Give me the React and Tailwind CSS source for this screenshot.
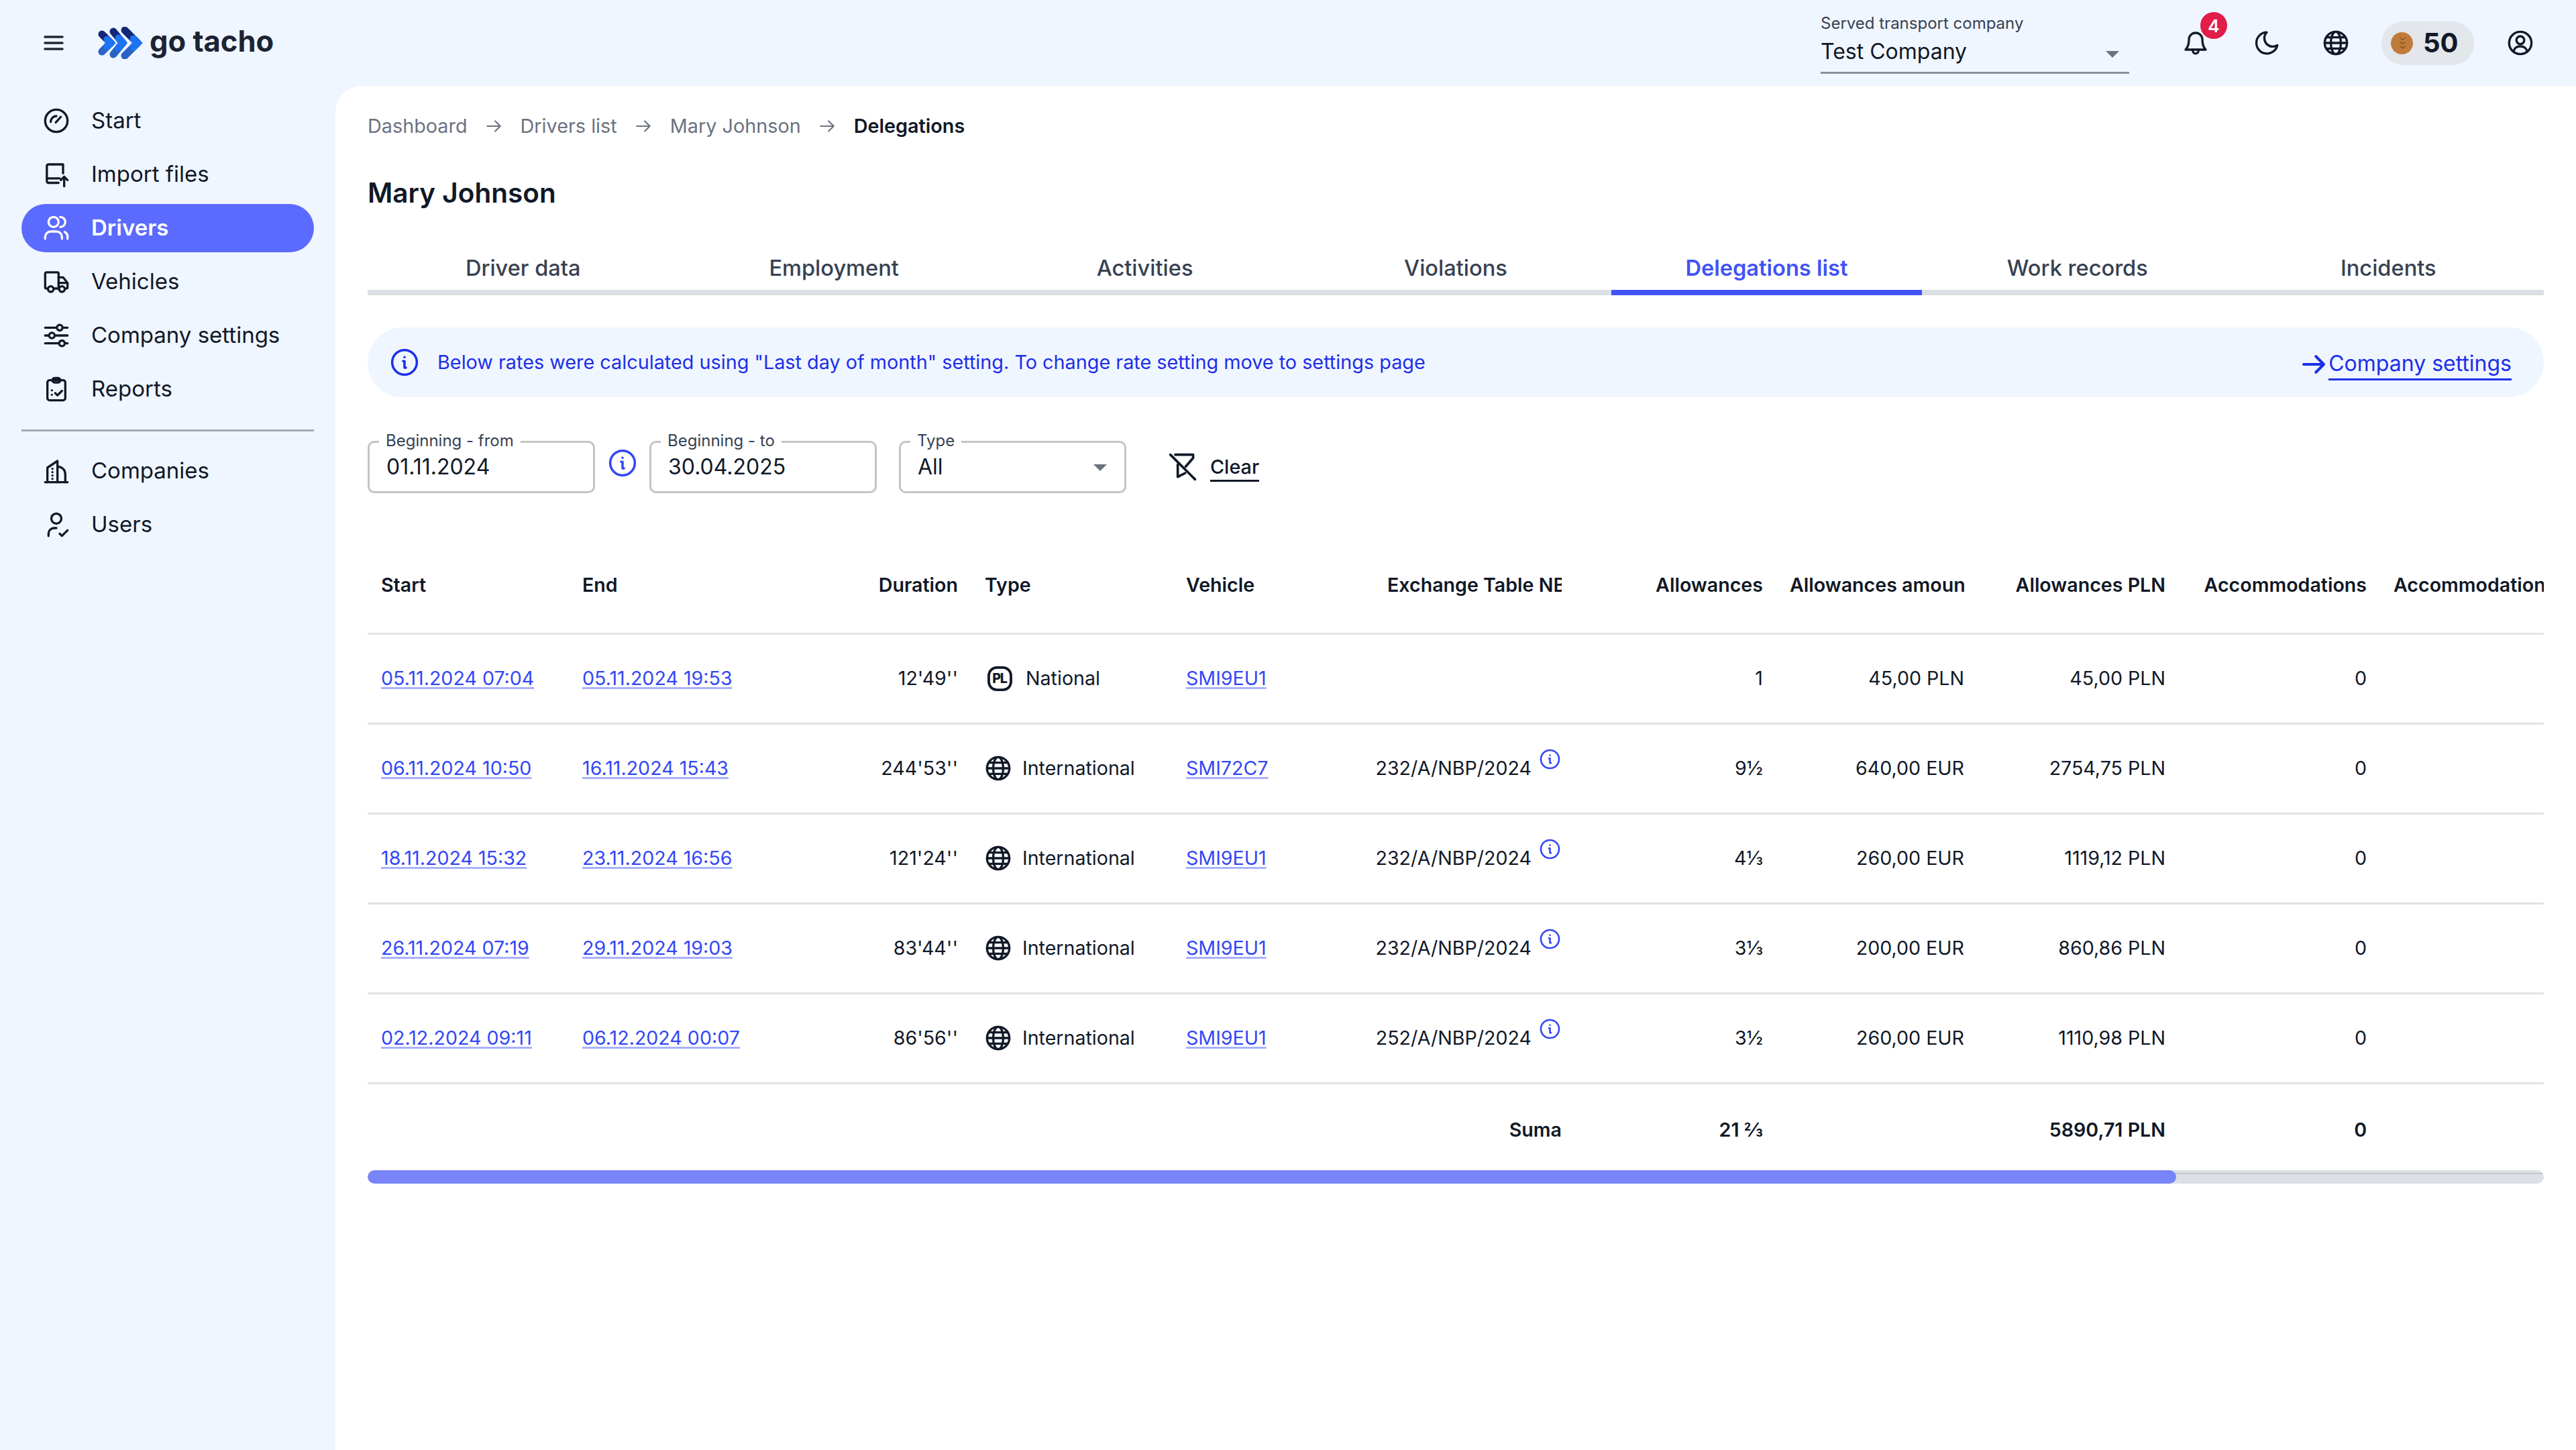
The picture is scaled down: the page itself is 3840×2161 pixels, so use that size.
import React from "react";

const Svg = ({ className = "", children, sw = 2 }) => (
  <svg viewBox="0 0 24 24" fill="none" stroke="currentColor" strokeWidth={sw} strokeLinecap="round" strokeLinejoin="round" className={className}>
    {children}
  </svg>
);

const GaugeIcon = (p) => (
  <Svg {...p}>
    <circle cx="12" cy="12" r="10" />
    <path d="M7 13a5 5 0 0 1 5-5.200" />
    <path d="M11.500 13.500 16 8.500" />
  </Svg>
);
const ImportIcon = (p) => (
  <Svg {...p}>
    <path d="M18 11V3H5a1.500 1.500 0 0 0-1.500 1.500V18A1.500 1.500 0 0 0 5 19.500h9" />
    <path d="M3.500 15.500H15" />
    <path d="M19 22.500V14m-3 3 3-3 3 3" />
  </Svg>
);
const UsersIcon = (p) => (
  <Svg {...p}>
    <circle cx="9.500" cy="6.500" r="4.500" />
    <path d="M2 21.500V20a5 5 0 0 1 5-5h5a5 5 0 0 1 5 5v1.500" />
    <path d="M15.500 2a4.500 4.500 0 0 1 0 9" />
    <path d="M19.500 15.500a4.500 4.500 0 0 1 2.500 4v2" />
  </Svg>
);
const TruckIcon = (p) => (
  <Svg {...p}>
    <path d="M4 18H3a1 1 0 0 1-1-1V4.500a1 1 0 0 1 1-1h10a1 1 0 0 1 1 1V18h-4" />
    <path d="M14 8h4l4 5v4a1 1 0 0 1-1 1h-1" />
    <path d="M14 13h8" />
    <circle cx="7" cy="18.500" r="2.500" />
    <circle cx="17" cy="18.500" r="2.500" />
  </Svg>
);
const SlidersIcon = (p) => (
  <Svg {...p}>
    <path d="M2 5h10m6 0h4" />
    <circle cx="15" cy="5" r="2.500" />
    <path d="M2 12h3m6 0h11" />
    <circle cx="8" cy="12" r="2.500" />
    <path d="M2 19h12m6 0h2" />
    <circle cx="17" cy="19" r="2.500" />
  </Svg>
);
const ClipboardIcon = (p) => (
  <Svg {...p}>
    <rect x="4" y="4" width="16" height="18" rx="2" />
    <rect x="8.500" y="2" width="7" height="4" rx="2" />
    <path d="M8 13h.01M8 17h.01" />
    <path d="m11 15.500 2 2 4-4" />
  </Svg>
);
const BuildingIcon = (p) => (
  <Svg {...p}>
    <path d="M2 22h20" />
    <path d="M4 22V9l9-6v19" />
    <path d="M13 8c4 0 7 3 7 7v7" />
    <path d="M8.500 10v.01M8.500 13v.01M8.500 16v.01M8.500 19v.01" />
  </Svg>
);
const UserCheckIcon = (p) => (
  <Svg {...p}>
    <circle cx="12" cy="6.500" r="4.500" />
    <path d="M5 22v-2a5 5 0 0 1 5-5h2" />
    <path d="m15 20 2 2 5-5" />
  </Svg>
);
const BellIcon = (p) => (
  <Svg {...p}>
    <path d="M6 9a6 6 0 0 1 12 0c0 5 1 7 3 9H3c2-2 3-4 3-9Z" />
    <path d="M9.500 18v1a2.500 2.500 0 0 0 5 0v-1" />
  </Svg>
);
const MoonIcon = (p) => (
  <Svg {...p}>
    <path d="M12 2.500A9.500 9.500 0 1 0 21.500 14 7.500 7.500 0 0 1 12 2.500Z" />
  </Svg>
);
const GlobeIcon = (p) => (
  <Svg {...p}>
    <circle cx="12" cy="12" r="10" />
    <path d="M2 12h20M3.500 7h17M3.500 17h17" />
    <ellipse cx="12" cy="12" rx="4.500" ry="10" />
  </Svg>
);
const ProfileIcon = (p) => (
  <Svg {...p}>
    <circle cx="12" cy="12" r="10" />
    <circle cx="12" cy="9.500" r="3.500" />
    <path d="M6 19.500c.5-3 3-4.500 6-4.500s5.500 1.500 6 4.500" />
  </Svg>
);
const InfoIcon = (p) => (
  <Svg {...p}>
    <circle cx="12" cy="12" r="10.500" />
    <path d="M12 7.500v.01" />
    <path d="M10.800 11H12v5.500h1.200" />
  </Svg>
);
const ArrowRight = (p) => (
  <Svg {...p}>
    <path d="M3 12h18M14 5l7 7-7 7" />
  </Svg>
);
const ClearIcon = (p) => (
  <Svg {...p}>
    <path d="M6 2h14.500v2.600l-6 7" />
    <path d="M8 10v10l6-3" />
    <path d="M2 2l20 20" />
  </Svg>
);
const PlIcon = ({ className }) => (
  <svg viewBox="0 0 34 34" className={className}>
    <rect x="1.800" y="1.800" width="30.400" height="30.400" rx="11" fill="none" stroke="currentColor" strokeWidth="3.500" />
    <text x="16.500" y="23" textAnchor="middle" fontSize="18" fontWeight="800" fontFamily="Inter, sans-serif" fill="currentColor" letterSpacing="-1">PL</text>
  </svg>
);

const Logo = () => (
  <svg viewBox="0 0 68 48" className="h-12 w-[68px]">
    <g strokeWidth="11" strokeLinecap="round" fill="none">
      <path d="M7 11 20 24" stroke="#13277a" />
      <path d="M7 37 20 24" stroke="#2a63c4" />
      <path d="M24 7 38 24" stroke="#13277a" />
      <path d="M24 41 38 24" stroke="#2a63c4" />
      <path d="M41 5 60 24" stroke="#13277a" />
      <path d="M41 43 60 24" stroke="#2a63c4" />
      <path d="M15 19 20 24 15 29" stroke="#1d74f2" />
      <path d="M32 17 38 24 32 31" stroke="#1d74f2" />
      <path d="M54 18 60 24 54 30" stroke="#1d74f2" />
    </g>
  </svg>
);

const Coin = () => (
  <svg viewBox="0 0 32 32" className="h-[33px] w-[33px]">
    <circle cx="16" cy="16" r="16" fill="#c07b3a" />
    <path d="M8 11l3 4-3 4M14 11l3 4-3 4M20 11l3 4-3 4" transform="rotate(90 16 16)" stroke="#8f5420" strokeWidth="1.500" fill="none" />
  </svg>
);

const navMain = [
  { label: "Start", Icon: GaugeIcon },
  { label: "Import files", Icon: ImportIcon },
  { label: "Drivers", Icon: UsersIcon, active: true },
  { label: "Vehicles", Icon: TruckIcon },
  { label: "Company settings", Icon: SlidersIcon },
  { label: "Reports", Icon: ClipboardIcon },
];
const navOther = [
  { label: "Companies", Icon: BuildingIcon },
  { label: "Users", Icon: UserCheckIcon },
];

const NavItem = ({ label, Icon, active }) => (
  <a className={`flex h-[72px] items-center rounded-full pl-[32px] text-[33px] ${active ? "bg-[#5b6bff] font-semibold text-white" : "text-[#111827]"}`}>
    <Icon className="mr-[32px] h-[40px] w-[40px] shrink-0" />
    {label}
  </a>
);

const Crumb = ({ children, last }) => (
  <>
    <span className={last ? "font-semibold text-[#111827]" : "text-[#6b7280]"}>{children}</span>
    {!last && <ArrowRight className="mx-[26.500px] h-[26px] w-[26px] text-[#6b7280]" />}
  </>
);

const tabs = ["Driver data", "Employment", "Activities", "Violations", "Delegations list", "Work records", "Incidents"];

const Field = ({ label, value, children, className = "" }) => (
  <div className={`relative flex h-[78px] w-[339px] items-center rounded-[10px] border-[3px] border-[#c4c4c4] pl-[25px] text-[32px] text-[#111827] ${className}`}>
    <span className="absolute left-[14px] top-[-15px] bg-white px-[10px] text-[24px] leading-[24px] text-[#374151]">{label}</span>
    {value}
    {children}
  </div>
);

const rows = [
  { start: "05.11.2024 07:04", end: "05.11.2024 19:53", dur: "12'49''", type: "National", car: "SMI9EU1", table: "", allow: "1", amount: "45,00 PLN", pln: "45,00 PLN" },
  { start: "06.11.2024 10:50", end: "16.11.2024 15:43", dur: "244'53''", type: "International", car: "SMI72C7", table: "232/A/NBP/2024", allow: "9½", amount: "640,00 EUR", pln: "2754,75 PLN" },
  { start: "18.11.2024 15:32", end: "23.11.2024 16:56", dur: "121'24''", type: "International", car: "SMI9EU1", table: "232/A/NBP/2024", allow: "4⅓", amount: "260,00 EUR", pln: "1119,12 PLN" },
  { start: "26.11.2024 07:19", end: "29.11.2024 19:03", dur: "83'44''", type: "International", car: "SMI9EU1", table: "232/A/NBP/2024", allow: "3⅓", amount: "200,00 EUR", pln: "860,86 PLN" },
  { start: "02.12.2024 09:11", end: "06.12.2024 00:07", dur: "86'56''", type: "International", car: "SMI9EU1", table: "252/A/NBP/2024", allow: "3½", amount: "260,00 EUR", pln: "1110,98 PLN" },
];

const headers = [
  ["Start", "text-left"],
  ["End", "text-left"],
  ["Duration", "text-right"],
  ["Type", "text-left"],
  ["Vehicle", "text-left"],
  ["Exchange Table NBP", "text-left"],
  ["Allowances", "text-right"],
  ["Allowances amount", "text-left"],
  ["Allowances PLN", "text-right"],
  ["Accommodations", "text-right"],
  ["Accommodations amount", "text-left"],
];

const linkCls = "text-[#3347f5] underline decoration-[#a9b2fb] decoration-[3px] underline-offset-[3px]";
const tdCls = "h-[134px] border-b-[3px] border-[#e3e3e3] px-5";
const sumCls = "px-5 pt-[8px] text-right";

export default function App() {
  return (
    <div className="flex h-screen flex-col overflow-hidden bg-[#f0f6ff] font-['Inter',sans-serif] text-[#111827]">
      <header className="flex h-[128px] shrink-0 items-center">
        <button className="ml-[62px] flex h-9 w-9 items-center justify-center text-[#1f2937]">
          <svg viewBox="0 0 30 24" className="h-6 w-[30px]" stroke="currentColor" strokeWidth="3.500" strokeLinecap="round">
            <path d="M2 3h26M2 12h26M2 21h26" />
          </svg>
        </button>
        <div className="ml-[47px] flex items-center">
          <Logo />
          <span className="ml-[10px] -translate-y-[2px] text-[43.500px] font-bold leading-none text-[#1c2433]">go tacho</span>
        </div>
        <div className="ml-auto flex items-center">
          <div className="relative mt-[-12px] h-[104px] w-[460px] border-b-[3px] border-[#8a8f98] pt-[14px]">
            <div className="text-[24px] leading-[30px] text-[#374151]">Served transport company</div>
            <div className="mt-[6px] text-[32px] leading-[42px]">Test Company</div>
            <span className="absolute right-[15px] top-[70px] h-0 w-0 border-x-[10px] border-t-[10px] border-x-transparent border-t-[#6b7280]" />
          </div>
          <div className="relative ml-[79px]">
            <BellIcon className="h-[40px] w-[40px]" />
            <span className="absolute left-[27px] top-[-26px] flex h-[40px] w-[40px] items-center justify-center rounded-full bg-[#e11d48] text-[26px] font-semibold text-white">4</span>
          </div>
          <MoonIcon className="ml-[66px] h-[40px] w-[40px]" />
          <GlobeIcon className="ml-[63px] h-[40px] w-[40px]" />
          <div className="ml-[48px] flex h-[65px] w-[138px] items-center rounded-full bg-[#e3e6ea] pl-[14px]">
            <Coin />
            <span className="ml-[15px] text-[40px] font-bold leading-none">50</span>
          </div>
          <ProfileIcon className="ml-[49px] mr-[63px] h-[40px] w-[40px]" />
        </div>
      </header>

      <div className="flex min-h-0 flex-1">
        <aside className="w-[500px] shrink-0 px-8">
          <nav className="flex flex-col gap-2 pt-[16px]">
            {navMain.map((n) => <NavItem key={n.label} {...n} />)}
          </nav>
          <div className="mt-[24px] mb-[23px] h-[3px] bg-[#a7abb2]" />
          <nav className="flex flex-col gap-2">
            {navOther.map((n) => <NavItem key={n.label} {...n} />)}
          </nav>
        </aside>

        <main className="min-w-0 flex-1 rounded-tl-[40px] bg-white px-[48px] pt-[44px]">
          <div className="flex h-[32px] items-center text-[28.800px]">
            {["Dashboard", "Drivers list", "Mary Johnson"].map((c) => <Crumb key={c}>{c}</Crumb>)}
            <Crumb last>Delegations</Crumb>
          </div>
          <h1 className="mt-[59px] text-[40.500px] font-semibold leading-[50px]">Mary Johnson</h1>

          <div className="mt-[51px] flex h-[76px] border-b-[8px] border-[#dcdfe5]">
            {tabs.map((t) => (
              <div key={t} className={`mb-[-8px] flex h-[76px] flex-1 items-center justify-center border-b-[8px] pt-[2px] text-[32.600px] font-medium ${t === "Delegations list" ? "border-[#4253f5] font-semibold text-[#4253f5]" : "border-transparent text-[#374151]"}`}>
                {t}
              </div>
            ))}
          </div>

          <div className="mt-[48px] flex h-[104px] items-center rounded-[52px] bg-[#f0f6ff] pl-[34px] pr-[48px] text-[#1d2fe8]">
            <InfoIcon className="h-[42px] w-[42px] shrink-0" />
            <span className="ml-[28px] text-[28.800px]">Below rates were calculated using "Last day of month" setting. To change rate setting move to settings page</span>
            <div className="ml-auto mt-[6px] flex items-center">
              <ArrowRight sw={2.500} className="mr-[2px] h-[40px] w-[40px]" />
              <span className="border-b-[3px] border-[#1d2fe8] text-[32px] leading-[44px]">Company settings</span>
            </div>
          </div>

          <div className="mt-[65px] flex items-center">
            <Field label="Beginning - from" value="01.11.2024" />
            <InfoIcon className="ml-[20px] mr-[19px] h-[42px] w-[42px] -translate-y-[6px] text-[#3347f5]" />
            <Field label="Beginning - to" value="30.04.2025" />
            <Field label="Type" value="All" className="ml-[33px]">
              <span className="absolute right-[26px] top-[32px] h-0 w-0 border-x-[10px] border-t-[10px] border-x-transparent border-t-[#6b7280]" />
            </Field>
            <ClearIcon className="ml-[62px] h-[44px] w-[44px]" />
            <span className="ml-[19px] mt-[3px] border-b-[3px] border-[#111827] text-[28.800px] font-medium leading-[38px]">Clear</span>
          </div>

          <div className="mt-[67px] overflow-hidden">
            <table className="w-[3900px] table-fixed border-separate border-spacing-0 text-[28.600px]">
              <thead>
                <tr>
                  {headers.map(([h, align]) => (
                    <th key={h} className={`h-[144px] w-[300px] border-b-[3px] border-[#e3e3e3] px-5 font-semibold ${align}`}>
                      <div className="overflow-hidden whitespace-nowrap">{h}</div>
                    </th>
                  ))}
                  <th className="w-[300px] border-b-[3px] border-[#e3e3e3]" />
                  <th className="w-[300px] border-b-[3px] border-[#e3e3e3]" />
                </tr>
              </thead>
              <tbody>
                {rows.map((r) => (
                  <tr key={r.start}>
                    <td className={tdCls}><a className={linkCls}>{r.start}</a></td>
                    <td className={tdCls}><a className={linkCls}>{r.end}</a></td>
                    <td className={`${tdCls} text-right`}>{r.dur}</td>
                    <td className={tdCls}>
                      <div className="flex items-center">
                        {r.type === "National" ? <PlIcon className="ml-[4px] mr-[20px] h-[37px] w-[37px]" /> : <GlobeIcon className="mr-[16px] h-[40px] w-[40px]" />}
                        {r.type}
                      </div>
                    </td>
                    <td className={tdCls}><a className={linkCls}>{r.car}</a></td>
                    <td className={`${tdCls} text-right`}>
                      {r.table && (
                        <div className="flex items-center justify-end whitespace-nowrap">
                          {r.table}
                          <InfoIcon className="ml-[12px] mr-[2px] h-[31px] w-[31px] shrink-0 -translate-y-[14px] text-[#3347f5]" />
                        </div>
                      )}
                    </td>
                    <td className={`${tdCls} text-right`}>{r.allow}</td>
                    <td className={`${tdCls} text-right`}>{r.amount}</td>
                    <td className={`${tdCls} text-right`}>{r.pln}</td>
                    <td className={`${tdCls} text-right`}>0</td>
                    <td className={tdCls} />
                    <td className={tdCls} />
                    <td className={tdCls} />
                  </tr>
                ))}
                <tr className="font-semibold">
                  <td className="h-[128px]" colSpan={5} />
                  <td className={sumCls}>Suma</td>
                  <td className={sumCls}>21 ⅔</td>
                  <td />
                  <td className={sumCls}>5890,71 PLN</td>
                  <td className={sumCls}>0</td>
                  <td colSpan={3} />
                </tr>
              </tbody>
            </table>
          </div>

          <div className="relative h-5 overflow-hidden rounded-full bg-[#dcdfe5] pt-[4px]">
            <div className="h-[2px] bg-[#c3c6ca]" />
            <div className="absolute inset-y-0 left-0 w-[83.100%] rounded-full bg-[#7785f8]" />
          </div>
        </main>
      </div>
    </div>
  );
}
